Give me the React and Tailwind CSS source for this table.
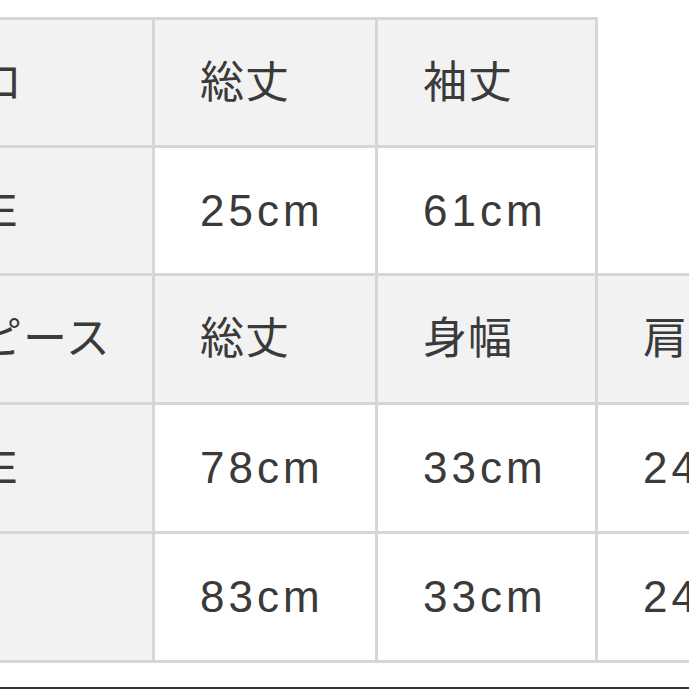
import React from 'react';

const font = { fontFamily: '"Liberation Sans", "Noto Sans CJK JP", sans-serif' };

const top = [
  ['ボレロ', '総丈', '袖丈'],
  ['FREE', '25cm', '61cm'],
];

const bottom = [
  ['ワンピース', '総丈', '身幅', '肩幅'],
  ['FREE', '78cm', '33cm', '24cm'],
  ['L', '83cm', '33cm', '24cm'],
];

function Cell({ text, head, rowHead, h }) {
  const bg = head || rowHead ? 'bg-[#f2f2f2]' : 'bg-white';
  const isNum = /\d/.test(text) || text === 'FREE';
  return (
    <div className={`${bg} ${h} flex items-center pl-[45px] whitespace-nowrap overflow-hidden`}>
      <span className={`text-[44px] text-[#3a3a3a] leading-none ${isNum ? 'tracking-[4px]' : 'tracking-[1px]'}`}>{text}</span>
    </div>
  );
}

export default function App() {
  return (
    <div className="w-[689px] h-[689px] overflow-hidden bg-white flex flex-col" style={font}>
      <div className="pt-[17px] ml-[-160px]">
        {/* top table */}
        <div className="grid grid-cols-[309px_220px_217px] gap-[3px] p-[3px] bg-[#d6d6d6] w-max">
          {top.map((row, r) =>
            row.map((t, c) => (
              <Cell key={`${r}-${c}`} text={t} head={r === 0} rowHead={c === 0} h="h-[125px]" />
            ))
          )}
        </div>
        {/* bottom table */}
        <div className="grid grid-cols-[309px_220px_217px_220px] gap-[3px] p-[3px] bg-[#d6d6d6] w-max -mt-[3px]">
          {bottom.map((row, r) =>
            row.map((t, c) => (
              <Cell key={`${r}-${c}`} text={t} head={r === 0} rowHead={c === 0} h="h-[126px]" />
            ))
          )}
        </div>
      </div>
      <div className="flex-1" />
      <div className="h-[2px] bg-[#333333]" />
    </div>
  );
}
